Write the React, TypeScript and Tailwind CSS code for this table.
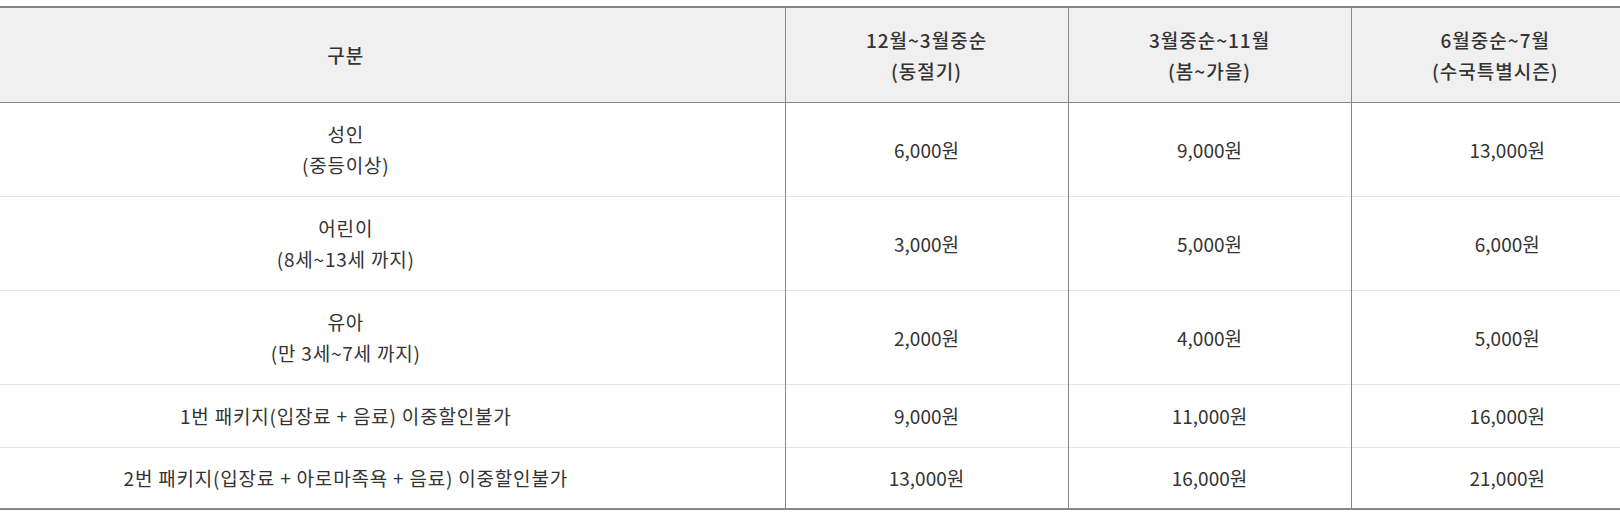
import React from "react";

const rows: { label: string[]; prices: string[] }[] = [
  { label: ["성인", "(중등이상)"], prices: ["6,000원", "9,000원", "13,000원"] },
  { label: ["어린이", "(8세~13세 까지)"], prices: ["3,000원", "5,000원", "6,000원"] },
  { label: ["유아", "(만 3세~7세 까지)"], prices: ["2,000원", "4,000원", "5,000원"] },
  { label: ["1번 패키지(입장료 + 음료) 이중할인불가"], prices: ["9,000원", "11,000원", "16,000원"] },
  { label: ["2번 패키지(입장료 + 아로마족욕 + 음료) 이중할인불가"], prices: ["13,000원", "16,000원", "21,000원"] },
];

const headers = [
  ["12월~3월중순", "(동절기)"],
  ["3월중순~11월", "(봄~가을)"],
  ["6월중순~7월", "(수국특별시즌)"],
];

export default function App() {
  return (
    <div
      className="w-[1620px] h-[513px] overflow-hidden bg-white pt-[6px]"
      style={{ fontFamily: '"Noto Sans CJK KR", "Noto Sans", sans-serif' }}
    >
      <table className="w-[1643px] table-fixed border-collapse border-t-2 border-b-2 border-t-[#808580] border-b-[#888888] text-[19px] leading-[31px] text-[#333333]">
        <colgroup>
          <col className="w-[785px]" />
          <col className="w-[283px]" />
          <col className="w-[283px]" />
          <col className="w-[292px]" />
        </colgroup>
        <thead>
          <tr className="h-[95px] bg-[#f0f0f0] border-b border-[#888888]">
            <th className="pr-[93px] font-medium tracking-[1px] text-center align-middle">구분</th>
            {headers.map((h, i) => (
              <th
                key={i}
                className={`border-l border-[#888888] font-medium tracking-[1px] text-center align-middle ${i === 2 ? "pr-[4px]" : ""}`}
              >
                <div>{h[0]}</div>
                <div>{h[1]}</div>
              </th>
            ))}
          </tr>
        </thead>
        <tbody>
          {rows.map((r, i) => (
            <tr
              key={i}
              className={`${i < 3 ? "h-[94px]" : i === 3 ? "h-[63px]" : "h-[62px]"} ${i < 4 ? "border-b border-[#e5e5e5]" : ""}`}
            >
              <td className="pr-[93px] tracking-[0.8px] text-center align-middle">
                {r.label.map((l, j) => (
                  <div key={j}>{l}</div>
                ))}
              </td>
              {r.prices.map((p, j) => (
                <td
                  key={j}
                  className={`border-l border-[#888888] text-center align-middle ${j === 2 ? "pl-[20px]" : ""}`}
                >
                  {p}
                </td>
              ))}
            </tr>
          ))}
        </tbody>
      </table>
    </div>
  );
}
